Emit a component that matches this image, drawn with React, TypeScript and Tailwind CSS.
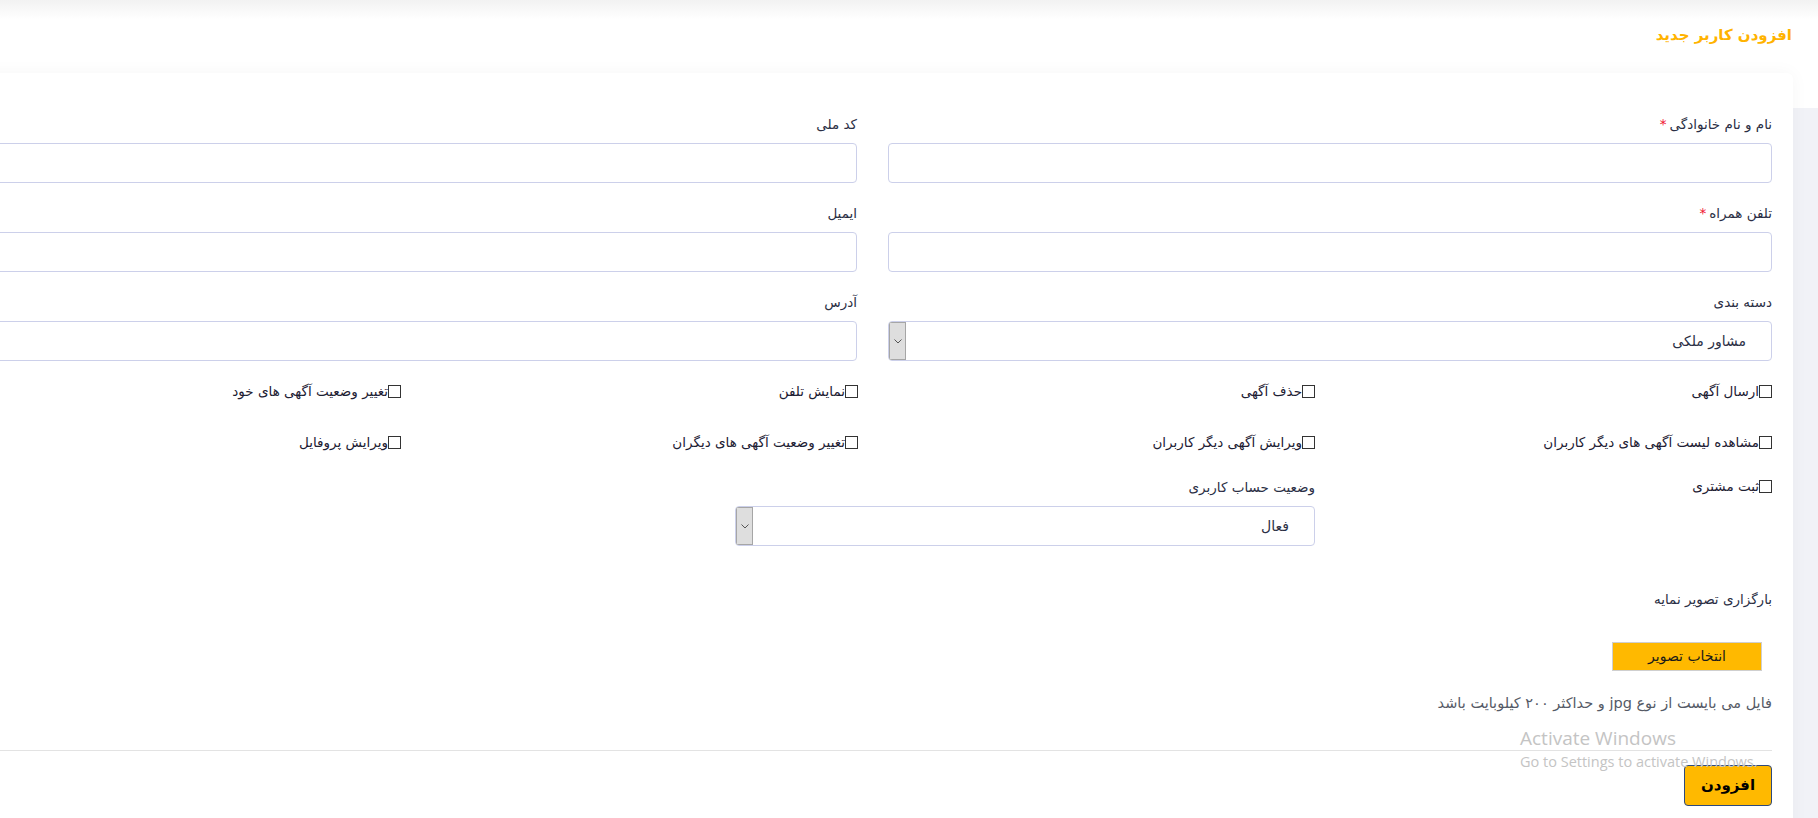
import React from "react";

const font = "font-['DejaVu_Sans',sans-serif]";

function Field({ label, required }: { label: string; required?: boolean }) {
  return (
    <div className="mb-[20px]">
      <label className="mb-[8px] block h-[21px] text-[13.5px] leading-[21px] text-[#2b2f45]">
        {label}
        {required && <span className="mr-[3px] text-[#f0142f]">*</span>}
      </label>
      <input
        type="text"
        className="block h-[40px] w-full rounded-[4px] border border-[#ccd0ea] bg-white outline-none"
      />
    </div>
  );
}

function FakeSelect({ value }: { value: string }) {
  return (
    <div className="flex h-[40px] w-full items-stretch overflow-hidden rounded-[4px] border border-[#ccd0ea] bg-white">
      <span className="flex-1 pr-[25px] text-[14px] leading-[38px] text-[#2b2f45]">{value}</span>
      <span className="flex w-[17px] items-center justify-center border border-[#a6a6a6] bg-[#dedede]">
        <svg width="8" height="5" viewBox="0 0 8 5" fill="none">
          <path d="M0.5 0.5L4 4L7.5 0.5" stroke="#555" strokeWidth="1" />
        </svg>
      </span>
    </div>
  );
}

function Check({ label }: { label: string }) {
  return (
    <label className="flex h-[21px] items-center text-[13.5px] leading-[21px] text-[#1d2033]">
      <input
        type="checkbox"
        className="m-0 h-[13px] w-[13px] shrink-0 appearance-none border border-[#333] bg-white"
      />
      <span>{label}</span>
    </label>
  );
}

export default function App() {
  return (
    <div dir="rtl" className={`relative h-[818px] w-full overflow-hidden bg-[#f1f2f7] ${font}`}>
      <div className="h-[108px] bg-gradient-to-b from-[#f2f2f2] via-white via-[18%] to-white pr-[26px] pt-[24px]">
        <h1 className="text-[15px] font-bold leading-[22px] text-[#ffb300]">افزودن کاربر جدید</h1>
      </div>

      <div className="-mt-[35px] pr-[25px]">
        <div className="w-[1880px] rounded-[6px] bg-white pr-[21px] pt-[41px] shadow-[0_0_18px_rgba(0,0,0,0.04)]">
          <div className="w-[1799px]">
            <div className="grid grid-cols-[884px_884px] gap-x-[31px]">
              <Field label="نام و نام خانوادگی" required />
              <Field label="کد ملی" />
              <Field label="تلفن همراه" required />
              <Field label="ایمیل" />
              <div className="mb-[18px]">
                <label className="mb-[8px] block h-[21px] text-[13.5px] leading-[21px] text-[#2b2f45]">دسته بندی</label>
                <FakeSelect value="مشاور ملکی" />
              </div>
              <Field label="آدرس" />
            </div>

            <div className="grid grid-cols-[427px_427px_427px_427px] gap-x-[30px] gap-y-[30px]">
              <Check label="ارسال آگهی" />
              <Check label="حذف آگهی" />
              <Check label="نمایش تلفن" />
              <Check label="تغییر وضعیت آگهی های خود" />
              <Check label="مشاهده لیست آگهی های دیگر کاربران" />
              <Check label="ویرایش آگهی دیگر کاربران" />
              <Check label="تغییر وضعیت آگهی های دیگران" />
              <Check label="ویرایش پروفایل" />
            </div>

            <div className="mt-[23px] flex gap-x-[30px]">
              <div className="w-[427px]">
                <Check label="ثبت مشتری" />
              </div>
              <div className="w-[580px] pt-[1px]">
                <label className="mb-[8px] block h-[21px] text-[13.5px] leading-[21px] text-[#2b2f45]">وضعیت حساب کاربری</label>
                <FakeSelect value="فعال" />
              </div>
            </div>

            <div className="mt-[43px] w-[884px]">
              <p className="h-[21px] text-[13.5px] leading-[21px] text-[#2b2f45]">بارگزاری تصویر نمایه</p>
              <button className="mr-[10px] mt-[32px] h-[29px] w-[150px] border border-[#cfcfcf] bg-[#ffb900] text-[14px] text-[#1a1a1a]">
                انتخاب تصویر
              </button>
              <p className="mt-[22px] h-[21px] text-[14.5px] leading-[21px] text-[#555a66]">
                فایل می بایست از نوع jpg و حداکثر ۲۰۰ کیلوبایت باشد
              </p>
            </div>

            <hr className="mt-[36px] border-0 border-t border-[#e3e3e3]" />
            <div className="pb-[40px] pt-[14px]">
              <button className="h-[41px] w-[88px] rounded-[4px] border border-[#2e4a7d] bg-[#ffb900] text-[15px] font-bold text-black">
                افزودن
              </button>
            </div>
          </div>
        </div>
      </div>

      <div dir="ltr" className="pointer-events-none absolute left-[1520px] top-[725px] font-['Open_Sans',sans-serif] text-[#c4c4c4]">
        <div className="text-[19px] leading-[27px]">Activate Windows</div>
        <div className="text-[14.5px] leading-[19px]">Go to Settings to activate Windows.</div>
      </div>
    </div>
  );
}
